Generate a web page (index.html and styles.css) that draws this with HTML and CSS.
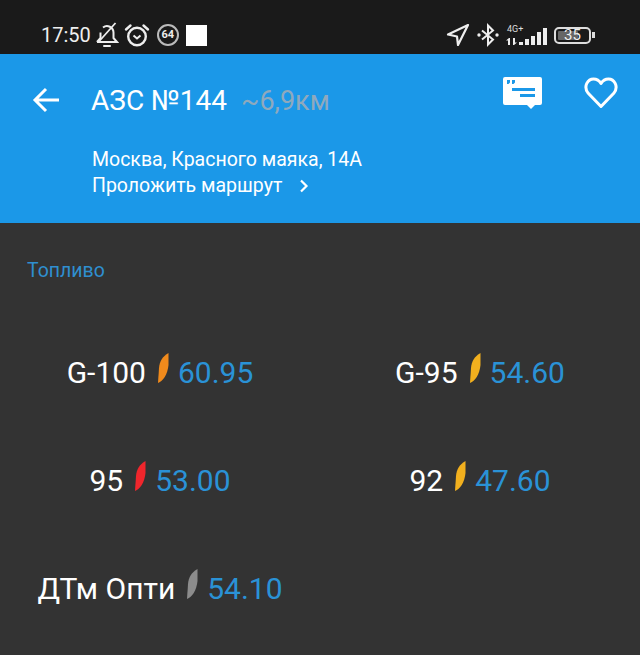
FILE: index.html
```html
<!DOCTYPE html>
<html lang="ru">
<head>
    <meta charset="UTF-8">
    <meta name="viewport" content="width=device-width, initial-scale=1.0">
    <title>АЗС №144</title>
    <link rel="stylesheet" href="styles.css">
</head>
<body>
    <div class="status-bar">
        <div class="status-left">
            <span class="clock">17:50</span>
            <svg class="bell" width="24" height="26" viewBox="0 0 24 26" fill="none" stroke="#eee" stroke-width="2">
                <path d="M2 20h20l-3.500-4V10.500a6.500 6.500 0 0 0-10.500-5M5.500 10.500V16L2 20"/>
                <path d="M20.500 1L3.500 20" stroke-width="1.800"/>
                <path d="M9 24h6" stroke-linecap="round"/>
            </svg>
            <svg class="alarm" width="26" height="24" viewBox="0 0 26 24" fill="none" stroke="#eee" stroke-width="2.400">
                <circle cx="13" cy="13.500" r="8.800"/>
                <path d="M9.500 12.500l3.500 3 3.500-3" stroke-width="2"/>
                <path d="M2 6.500l4.500-4M24 6.500l-4.500-4" stroke-linecap="round"/>
            </svg>
            <span class="badge-64">64</span>
            <span class="white-square"></span>
        </div>
        <div class="status-right">
            <svg width="24" height="24" viewBox="0 0 24 24" fill="none" stroke="#eee" stroke-width="2.200" stroke-linejoin="round">
                <path d="M22 2L2 11.500 11 13.500 12 22z"/>
            </svg>
            <svg width="22" height="24" viewBox="0 0 22 24" fill="none" stroke="#eee" stroke-width="2">
                <path d="M5 7.500l11 9-5 5V2.500l5 5-11 9"/>
                <circle cx="2" cy="12" r="1.700" fill="#eee" stroke="none"/>
                <circle cx="20" cy="12" r="1.700" fill="#eee" stroke="none"/>
            </svg>
            <div class="signal">
                <span class="net-label">4G+</span>
                <div class="bars">
                    <svg width="12" height="7" viewBox="0 0 12 7" fill="#eee">
                        <path d="M2 2.500H0L3 0h1v7H2zM7 0h2v4.500H11L8 7H7z"/>
                    </svg>
                    <i class="bar h1"></i><i class="bar h2"></i><i class="bar h3"></i><i class="bar h4"></i><i class="bar h5"></i>
                </div>
            </div>
            <div class="battery">
                <div class="battery-body">
                    <span class="battery-fill"></span>
                    <span class="battery-num">35</span>
                </div>
                <span class="battery-tip"></span>
            </div>
        </div>
    </div>

    <header class="station-head">
        <div class="head-top">
            <svg class="back" width="30" height="30" viewBox="0 0 30 30" fill="none" stroke="#fff" stroke-width="3">
                <path d="M28 15H4M15 4L4 15l11 11"/>
            </svg>
            <div class="title"><span>АЗС №144</span><span class="distance">~6,9км</span></div>
            <div class="head-actions">
                <svg width="39" height="32" viewBox="0 0 39 32">
                    <path d="M2 0h35a2 2 0 0 1 2 2v24a2 2 0 0 1-2 2h-5l-4 4-4-4H2a2 2 0 0 1-2-2V2a2 2 0 0 1 2-2z" fill="#fff"/>
                    <path d="M9 11h23v3H9zM17 17h15v3H17z" fill="#1b98e8"/>
                    <path d="M4 3h3v2.500L5.500 7H4zM9 3h3v2.500L10.500 7H9z" fill="#1b98e8"/>
                </svg>
                <svg width="34" height="32" viewBox="0 0 34 32" fill="none" stroke="#fff" stroke-width="3" stroke-linejoin="round">
                    <path d="M17 29.500L4 16C-1 9 4 2 9.500 2 13 2 15.500 4 17 6.500 18.500 4 21 2 24.500 2 30 2 35 9 30 16z"/>
                </svg>
            </div>
        </div>
        <div class="address">Москва, Красного маяка, 14А</div>
        <div class="route">
            <span>Проложить маршрут</span>
            <svg width="10" height="14" viewBox="0 0 10 14" fill="none" stroke="#fff" stroke-width="2.200">
                <path d="M2 1.500L7.500 7 2 12.500"/>
            </svg>
        </div>
    </header>

    <main class="fuel">
        <div class="fuel-label">Топливо</div>
        <div class="fuel-grid">
            <div class="fuel-item">
                <span class="fuel-name">G-100</span>
                <svg class="leaf" width="11" height="30" viewBox="0 0 11 30"><path class="leaf-orange" d="M10.500 0C5 3 1.500 8 1 15L0 30C5 28 9.500 22 10.500 12z"/></svg>
                <span class="fuel-price">60.95</span>
            </div>
            <div class="fuel-item">
                <span class="fuel-name">G-95</span>
                <svg class="leaf" width="11" height="30" viewBox="0 0 11 30"><path class="leaf-yellow" d="M10.500 0C5 3 1.500 8 1 15L0 30C5 28 9.500 22 10.500 12z"/></svg>
                <span class="fuel-price">54.60</span>
            </div>
            <div class="fuel-item">
                <span class="fuel-name">95</span>
                <svg class="leaf" width="11" height="30" viewBox="0 0 11 30"><path class="leaf-red" d="M10.500 0C5 3 1.500 8 1 15L0 30C5 28 9.500 22 10.500 12z"/></svg>
                <span class="fuel-price">53.00</span>
            </div>
            <div class="fuel-item">
                <span class="fuel-name">92</span>
                <svg class="leaf" width="11" height="30" viewBox="0 0 11 30"><path class="leaf-yellow" d="M10.500 0C5 3 1.500 8 1 15L0 30C5 28 9.500 22 10.500 12z"/></svg>
                <span class="fuel-price">47.60</span>
            </div>
            <div class="fuel-item">
                <span class="fuel-name">ДТм Опти</span>
                <svg class="leaf" width="11" height="30" viewBox="0 0 11 30"><path class="leaf-grey" d="M10.500 0C5 3 1.500 8 1 15L0 30C5 28 9.500 22 10.500 12z"/></svg>
                <span class="fuel-price">54.10</span>
            </div>
        </div>
    </main>
</body>
</html>
```

FILE: styles.css
```css
html, body {
    margin: 0;
    padding: 0;
}
body {
    width: 640px;
    height: 655px;
    overflow: hidden;
    background-color: #333333;
    font-family: Roboto, sans-serif;
}
.status-bar {
    height: 54px;
    box-sizing: border-box;
    padding: 21px 45px 0 41px;
    display: flex;
    justify-content: space-between;
    align-items: flex-start;
    background-color: #1a1a1a;
    color: #eeeeee;
}
.status-left, .status-right {
    display: flex;
    align-items: center;
    height: 28px;
}
.clock {
    font-size: 20px;
    margin-right: 4px;
}
.bell {
    margin-right: 5px;
}
.alarm {
    margin-right: 7px;
}
.badge-64 {
    width: 22px;
    height: 22px;
    box-sizing: border-box;
    margin-right: 7px;
    border: 2px solid #bbbbbb;
    border-radius: 50%;
    font-size: 11px;
    font-weight: 700;
    line-height: 18px;
    text-align: center;
}
.white-square {
    width: 21px;
    height: 21px;
    background-color: #ffffff;
}
.status-right {
    gap: 7px;
}
.signal {
    display: flex;
    flex-direction: column;
    width: 41px;
    height: 20px;
}
.net-label {
    font-size: 9px;
    line-height: 9px;
    margin-left: 1px;
    color: #dddddd;
}
.bars {
    display: flex;
    align-items: flex-end;
    gap: 2px;
    height: 17px;
    margin-top: -6px;
}
.bars svg {
    margin-right: -1px;
}
.bar {
    width: 4px;
    background-color: #eeeeee;
}
.h1 { height: 3px; }
.h2 { height: 6px; }
.h3 { height: 9px; }
.h4 { height: 13px; }
.h5 { height: 17px; }
.battery {
    display: flex;
    align-items: center;
    gap: 1px;
}
.battery-body {
    position: relative;
    width: 37px;
    height: 17px;
    box-sizing: border-box;
    border: 2px solid #dddddd;
    border-radius: 5px;
}
.battery-fill {
    position: absolute;
    left: 2px;
    top: 2px;
    bottom: 2px;
    width: 20px;
    background-color: #666666;
    border-radius: 1px;
}
.battery-num {
    position: absolute;
    left: 0;
    right: 0;
    top: 0;
    font-size: 15px;
    line-height: 13px;
    text-align: center;
}
.battery-tip {
    width: 3px;
    height: 6px;
    background-color: #dddddd;
}

.station-head {
    height: 169px;
    box-sizing: border-box;
    padding: 29px 22px 0 31px;
    background-color: #1b98e8;
    color: #ffffff;
}
.head-top {
    display: flex;
    align-items: flex-start;
    height: 64px;
}
.back {
    margin: 2px 30px 0 0;
}
.title {
    flex: 1;
    font-size: 28px;
    line-height: 36px;
}
.distance {
    margin-left: 14px;
    font-size: 27px;
    color: #8fa9bd;
}
.head-actions {
    display: flex;
    gap: 42px;
    margin-top: -6px;
}
.address, .route {
    margin-left: 61px;
    font-size: 19.500px;
    line-height: 26px;
}
.route {
    display: flex;
    align-items: center;
    gap: 17px;
}

.fuel {
    padding: 36px 0 0;
}
.fuel-label {
    margin-left: 27px;
    font-size: 19.500px;
    line-height: 24px;
    color: #2f8fd0;
}
.fuel-grid {
    display: grid;
    grid-template-columns: 320px 320px;
    grid-auto-rows: 108px;
    margin-top: 35px;
}
.fuel-item {
    display: flex;
    justify-content: center;
    align-items: center;
    font-size: 30px;
}
.fuel-name {
    color: #ffffff;
}
.fuel-price {
    color: #2a92d6;
}
.leaf {
    margin: -8px 9px 0 12px;
}
.leaf-orange { fill: #f08a1c; }
.leaf-yellow { fill: #f2b01e; }
.leaf-red { fill: #f0262c; }
.leaf-grey { fill: #8c8c8c; }
```
